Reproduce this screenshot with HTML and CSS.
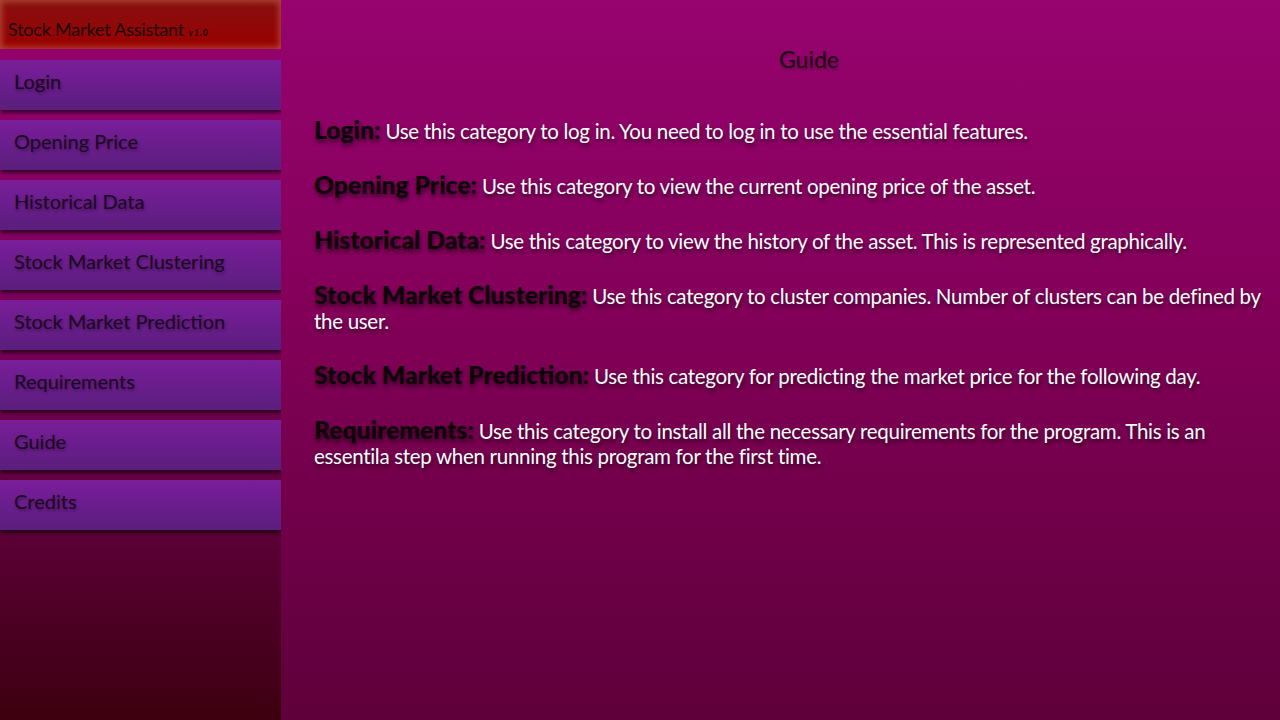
FILE: index.html
```html
<!DOCTYPE html>
<html>
<head>
<meta charset="utf-8">
<title>Stock Market Assistant</title>
<link rel="stylesheet" href="styles.css">
</head>
<body>
<div class="app">
  <aside class="sidebar">
    <div class="brand">Stock Market Assistant <span class="ver">v1.0</span></div>
    <nav class="nav">
      <div class="nav-item">Login</div>
      <div class="nav-item">Opening Price</div>
      <div class="nav-item">Historical Data</div>
      <div class="nav-item">Stock Market Clustering</div>
      <div class="nav-item">Stock Market Prediction</div>
      <div class="nav-item">Requirements</div>
      <div class="nav-item">Guide</div>
      <div class="nav-item">Credits</div>
    </nav>
  </aside>
  <main class="main">
    <h1 class="title">Guide</h1>
    <div class="guide">
      <p><b>Login:</b> Use this category to log in. You need to log in to use the essential features.</p>
      <p><b>Opening Price:</b> Use this category to view the current opening price of the asset.</p>
      <p><b>Historical Data:</b> Use this category to view the history of the asset. This is represented graphically.</p>
      <p><b>Stock Market Clustering:</b> Use this category to cluster companies. Number of clusters can be defined by the user.</p>
      <p><b>Stock Market Prediction:</b> Use this category for predicting the market price for the following day.</p>
      <p><b>Requirements:</b> Use this category to install all the necessary requirements for the program. This is an essentila step when running this program for the first time.</p>
    </div>
  </main>
</div>
</body>
</html>
```
FILE: styles.css
```css
* { box-sizing: border-box; }
html, body { margin: 0; padding: 0; height: 100%; }
body {
  font-family: "Lato", "Open Sans", "Liberation Sans", sans-serif;
  overflow: hidden;
}
.app {
  display: flex;
  width: 1280px;
  height: 720px;
}
.sidebar {
  width: 281px;
  flex: none;
  background: linear-gradient(to bottom, #99006f 0%, #7a0058 45%, #5a0035 75%, #3c000f 100%);
  display: flex;
  flex-direction: column;
}
.brand {
  height: 49px;
  padding: 18px 8px 0 8px;
  font-size: 18px;
  color: #1a0200;
  background: linear-gradient(to bottom, #861010 0%, #9a0000 100%);
  box-shadow: inset 0 0 6px 2px rgba(190, 90, 70, 0.75);
  letter-spacing: -0.2px;
}
.brand .ver { font-size: 9px; font-style: italic; font-weight: bold; letter-spacing: 0.8px; }
.nav {
  display: flex;
  flex-direction: column;
  gap: 10px;
  padding-top: 11px;
}
.nav-item {
  height: 50px;
  padding: 9px 14px 0 14px;
  font-size: 20px;
  color: #1a0520;
  text-shadow: 1px 2px 3px rgba(0, 0, 0, 0.35);
  background: linear-gradient(to bottom, #7a1e9a 0%, #6a1d8c 50%, #5a1f7c 100%);
  box-shadow: 1px 3px 3px rgba(0, 0, 0, 0.55);
}
.main {
  flex: 1;
  background: linear-gradient(to bottom, #97036f 0%, #820058 45%, #5e003a 100%);
  padding: 0 8px 0 33px;
}
.title {
  margin: 43px 0 0 0;
  padding-left: 32px;
  text-align: center;
  font-size: 23px;
  font-weight: normal;
  color: #1a0012;
  line-height: 32px;
  text-shadow: 1px 2px 3px rgba(0, 0, 0, 0.3);
}
.guide {
  margin-top: 44px;
  display: flex;
  flex-direction: column;
  gap: 30px;
}
.guide p {
  margin: 0;
  font-size: 20.5px;
  line-height: 25px;
  color: #ffffff;
  text-shadow: 1px 3px 4px rgba(0, 0, 0, 0.6);
  letter-spacing: -0.3px;
}
.guide b {
  font-size: 24.7px;
  line-height: 20px;
  font-weight: 900;
  color: #0d0008;
  text-shadow: 1px 3px 4px rgba(0, 0, 0, 0.6);
  letter-spacing: 0;
}
```
